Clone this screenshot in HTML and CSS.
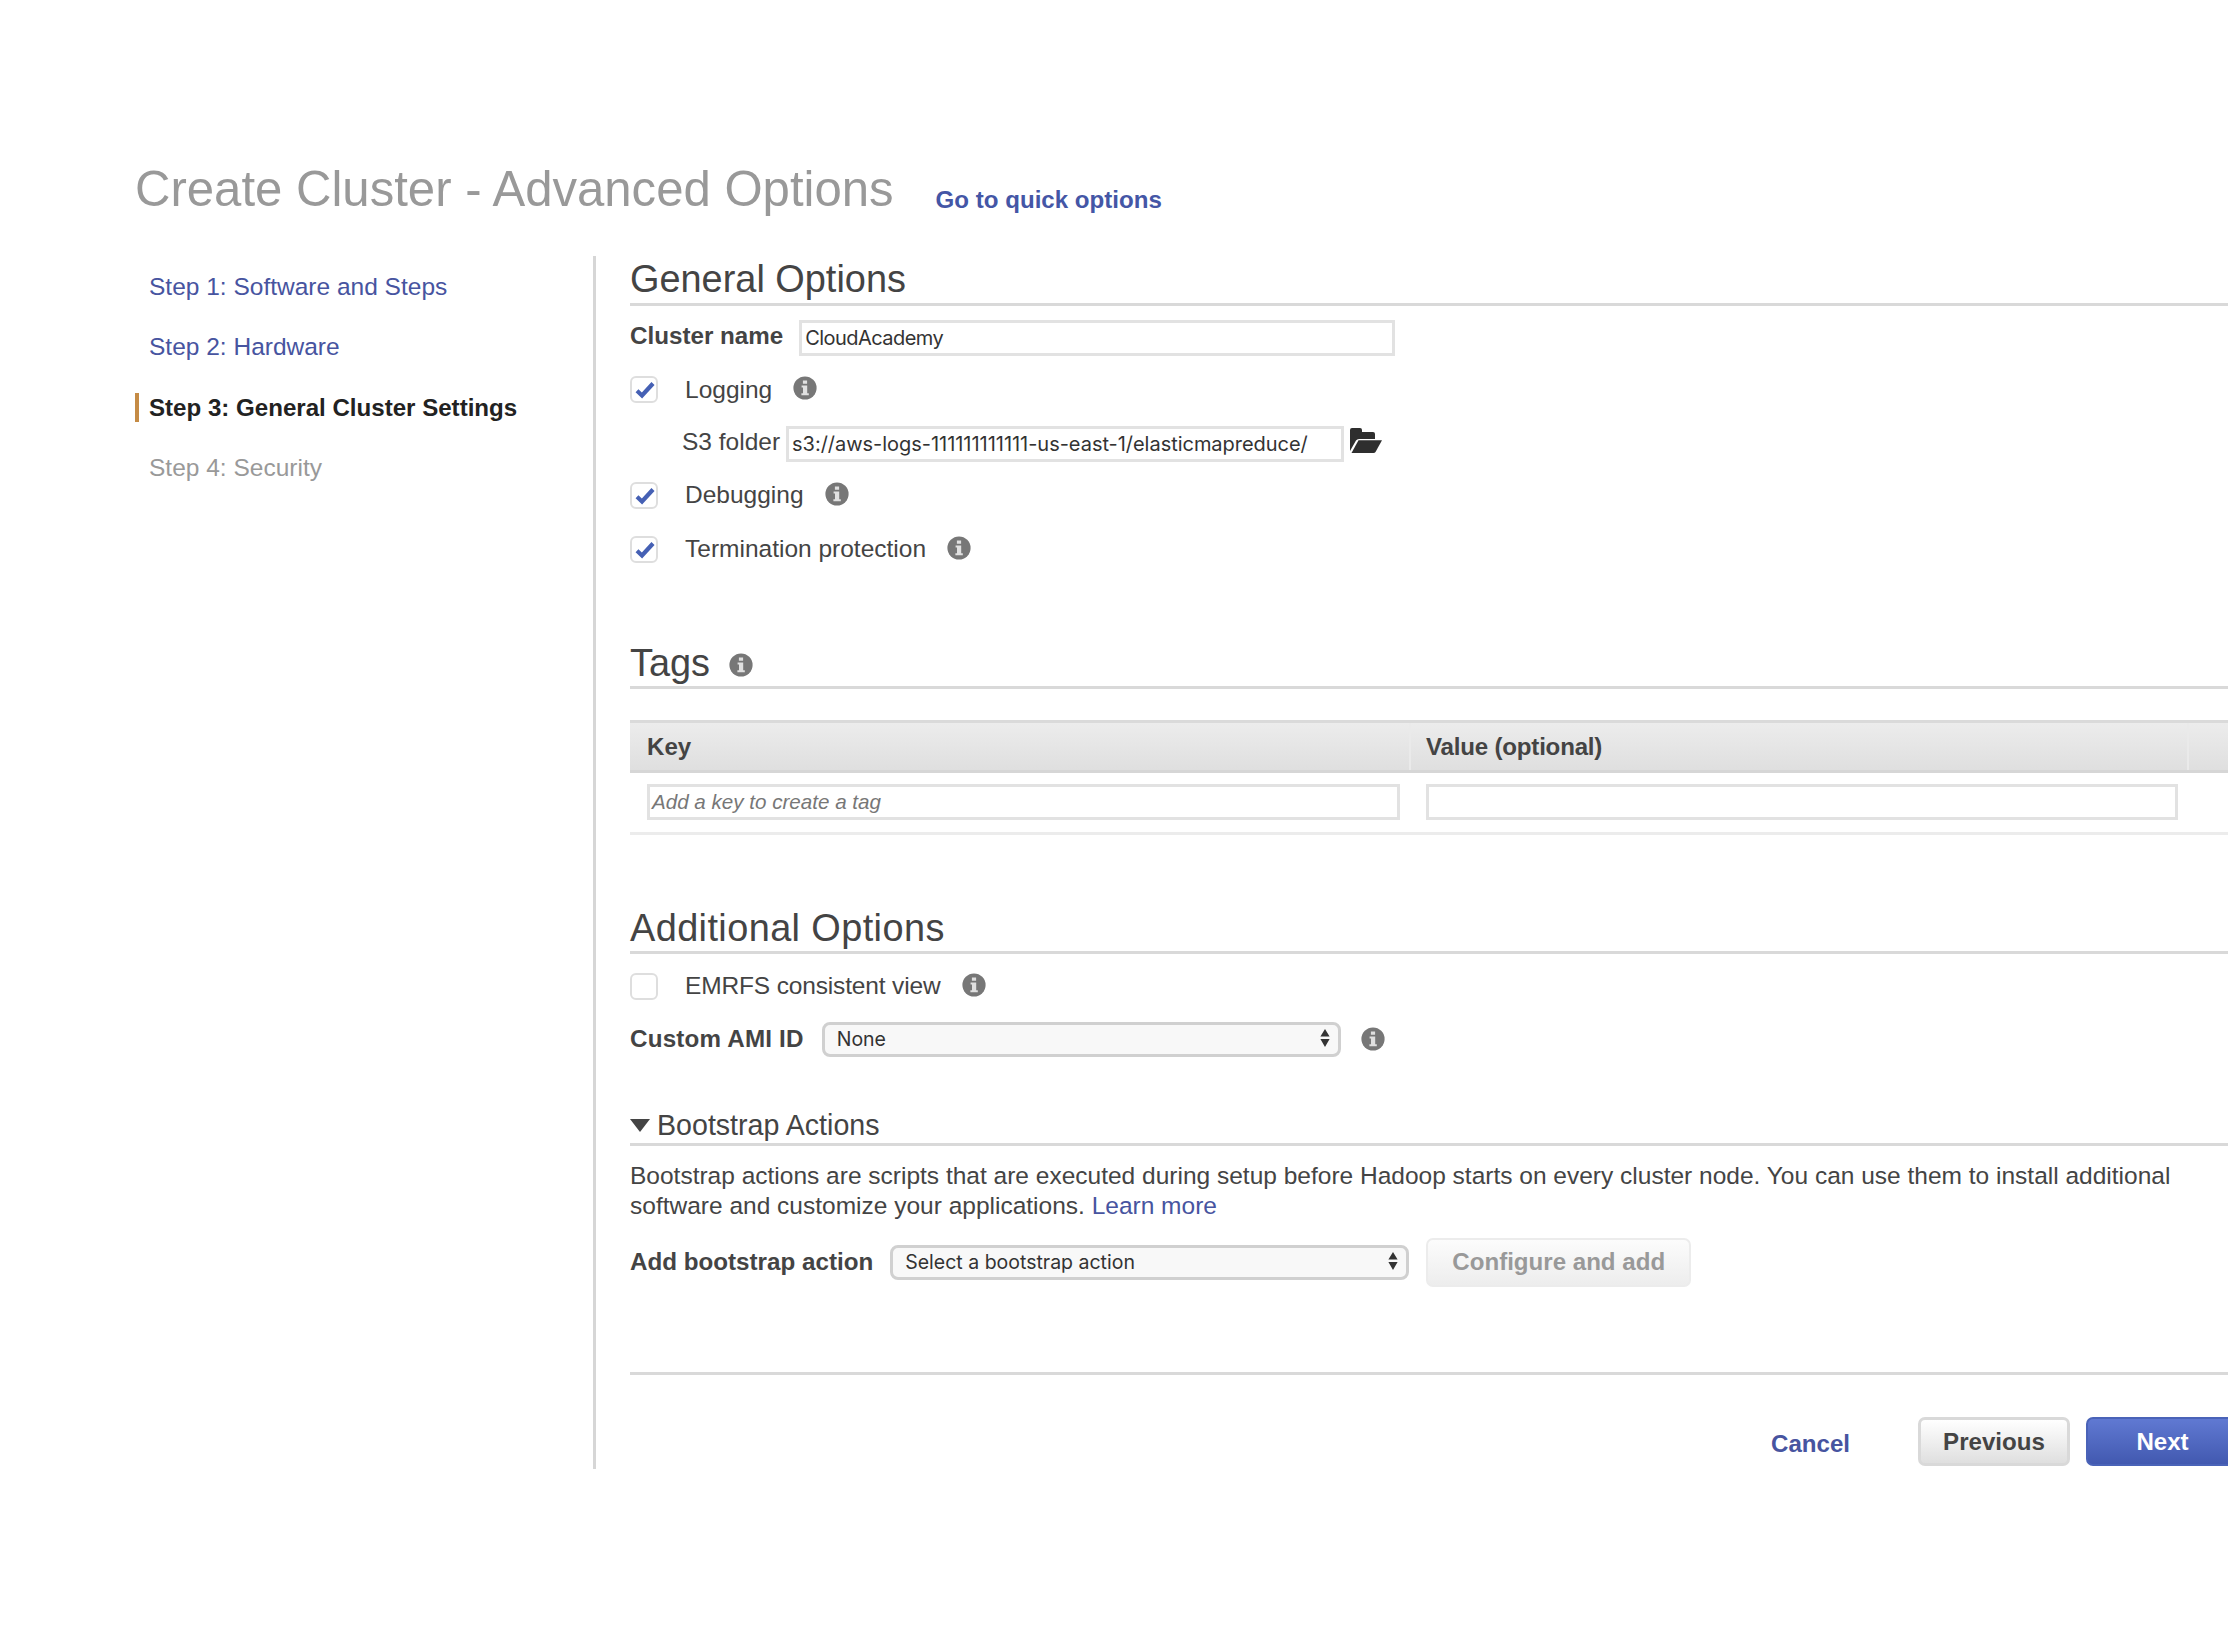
FILE: index.html
```html
<!DOCTYPE html>
<html lang="en">
<head>
<meta charset="utf-8">
<title>Create Cluster - Advanced Options</title>
<link rel="stylesheet" href="styles.css">
</head>
<body>
<svg class="defs" aria-hidden="true">
  <symbol id="info" viewBox="0 0 24 24">
    <circle cx="12" cy="12" r="11.6" fill="#777"/>
    <path d="M9.9 4.4h4.2v3.4H9.9zM8.6 9.6h5.6v7.6h1.6v2H8.4v-2H10v-5.6H8.6z" fill="#e0e0e0"/>
  </symbol>
  <symbol id="check" viewBox="0 0 20 18">
    <path d="M2 9.800 7 14.500 18 2.500" fill="none" stroke="#4560b4" stroke-width="4.200"/>
  </symbol>
  <symbol id="arrows" viewBox="0 0 10 18">
    <path d="M5 0 9.6 7.4H.4zM5 18 9.6 10H.4z" fill="#333"/>
  </symbol>
</svg>
<header class="page-head">
  <h1>Create Cluster - Advanced Options</h1>
  <a class="quick">Go to quick options</a>
</header>
<div class="layout">
  <nav class="steps">
    <a class="step">Step 1: Software and Steps</a>
    <a class="step">Step 2: Hardware</a>
    <a class="step current">Step 3: General Cluster Settings</a>
    <a class="step disabled">Step 4: Security</a>
  </nav>
  <main>
    <h2 class="h-general">General Options</h2>
    <div class="row row-name">
      <span class="label">Cluster name</span>
      <div class="input input-name">CloudAcademy</div>
    </div>
    <div class="row row-logging">
      <span class="checkbox"><svg><use href="#check"/></svg></span>
      <span class="text">Logging</span>
      <svg class="info"><use href="#info"/></svg>
    </div>
    <div class="row row-s3">
      <span class="text">S3 folder</span>
      <div class="input input-s3">s3://aws-logs-111111111111-us-east-1/elasticmapreduce/</div>
      <svg class="folder" viewBox="0 0 34 27">
        <path d="M1 24V3q0-2 2-2h8q2 0 2 2v2h11q2 0 2 2v5H10q-2 0-3 1.500z" fill="#2e2e2e"/>
        <path d="M9.500 13.200H33L26.500 25q-.6 1-2 1H2.500z" fill="#2e2e2e"/>
      </svg>
    </div>
    <div class="row row-debug">
      <span class="checkbox"><svg><use href="#check"/></svg></span>
      <span class="text">Debugging</span>
      <svg class="info"><use href="#info"/></svg>
    </div>
    <div class="row row-term">
      <span class="checkbox"><svg><use href="#check"/></svg></span>
      <span class="text">Termination protection</span>
      <svg class="info"><use href="#info"/></svg>
    </div>

    <h2 class="h-tags">Tags <svg class="info"><use href="#info"/></svg></h2>
    <div class="table">
      <div class="tr thead"><span>Key</span><span>Value (optional)</span><span></span></div>
      <div class="tr tbody">
        <span><span class="input placeholder">Add a key to create a tag</span></span>
        <span><span class="input"></span></span>
        <span></span>
      </div>
    </div>

    <h2 class="h-additional">Additional Options</h2>
    <div class="row row-emrfs">
      <span class="checkbox"></span>
      <span class="text">EMRFS consistent view</span>
      <svg class="info"><use href="#info"/></svg>
    </div>
    <div class="row row-ami">
      <span class="label">Custom AMI ID</span>
      <div class="select">None<svg class="arrows"><use href="#arrows"/></svg></div>
      <svg class="info"><use href="#info"/></svg>
    </div>

    <h3><svg class="caret" viewBox="0 0 20 13"><path d="M0 0h20L10 13z" fill="#444"/></svg>Bootstrap Actions</h3>
    <p>Bootstrap actions are scripts that are executed during setup before Hadoop starts on every cluster node. You can use them to install additional<br>software and customize your applications. <a>Learn more</a></p>
    <div class="row row-action">
      <span class="label">Add bootstrap action</span>
      <div class="select">Select a bootstrap action<svg class="arrows"><use href="#arrows"/></svg></div>
      <span class="button muted">Configure and add</span>
    </div>

    <footer>
      <a class="cancel">Cancel</a>
      <span class="button previous">Previous</span>
      <span class="button next">Next</span>
    </footer>
  </main>
</div>
</body>
</html>
```
FILE: styles.css
```css
* { box-sizing: border-box; }
html { overflow: hidden; }
body {
  margin: 0;
  width: 2228px;
  height: 1638px;
  overflow: hidden;
  background: #fff;
  color: #444;
  font-family: "Liberation Sans", Arial, sans-serif;
  font-size: 24.5px;
  line-height: 30px;
  white-space: nowrap;
}
.defs { display: none; }
svg { display: block; flex: none; }
a { color: #4754a0; }

.page-head {
  display: flex;
  align-items: flex-start;
  height: 256px;
  padding: 158px 0 0 135px;
}
h1 { margin: 0; font-size: 49.1px; line-height: 62px; font-weight: 400; color: #999; }
.quick { margin: 27px 0 0 42px; font-size: 24.1px; font-weight: 700; color: #4456a6; }

.layout { display: flex; }
.steps { display: flex; flex: none; flex-direction: column; width: 593px; padding: 16px 0 0 135px; }
.step { height: 29px; margin-bottom: 31.4px; padding-left: 10px; border-left: 4px solid transparent; }
.current { border-color: #c58b45; color: #222; font-size: 24.1px; font-weight: 700; }
.disabled { color: #999; }

main { flex: none; width: 1635px; height: 1213px; padding-left: 34px; border-left: 3px solid #d6d6d6; }
h2 {
  display: flex;
  align-items: center;
  height: 49px;
  margin: 0;
  padding-bottom: 1px;
  border-bottom: 3px solid #d9d9d9;
  font-size: 37.9px;
  font-weight: 400;
}
h2 .info { margin: 4px 0 0 19px; }
.h-general { height: 50px; padding-bottom: 2px; }
.h-tags { margin-top: 60px; }
.h-additional { margin-top: 70px; letter-spacing: .4px; }

.row { display: flex; align-items: center; }
.row > * { flex: none; }
.row .info { margin: 0 0 3px 21px; }
.label { font-size: 24.2px; font-weight: 700; }
.info { width: 24px; height: 24px; }
.input {
  display: block;
  height: 36px;
  padding-left: 3px;
  border: 3px solid #e2e2e2;
  background: #fff;
  color: #333;
  font-family: Inter, sans-serif;
  font-size: 20px;
}
.checkbox {
  display: flex;
  width: 28px;
  height: 27px;
  margin-right: 27px;
  padding: 3px 0 0 3px;
  border: 2px solid #dedede;
  border-radius: 6px;
}
.checkbox svg { width: 20px; height: 18px; }

.row-name { height: 53px; margin-top: 5px; }
.row-name .label { padding-bottom: 4px; }
.input-name { width: 596px; margin-left: 16px; letter-spacing: -.55px; }
.row-logging { height: 51px; }
.row-s3 { height: 57px; padding-left: 52px; }
.row-s3 .text { padding-bottom: 3px; }
.input-s3 { width: 558px; margin-left: 6px; letter-spacing: -.03px; }
.folder { width: 34px; height: 27px; margin: 0 0 7px 5px; }
.row-debug { height: 46px; }
.row-term { height: 62px; }

.table { margin-top: 31px; }
.tr { display: grid; grid-template-columns: 779px 778px 41px; }
.thead {
  height: 53px;
  border-top: 3px solid #dadada;
  border-bottom: 3px solid #d6d6d6;
  background: linear-gradient(#ececec, #dfdfdf);
  font-size: 24.1px;
  font-weight: 700;
  line-height: 47px;
}
.thead > span { padding-left: 17px; }
.thead > span + span { padding-left: 15px; border-left: 2px solid #eaeaea; letter-spacing: -.2px; }
.tbody { height: 62px; padding-top: 11px; border-bottom: 3px solid #ececec; }
.tbody > span { padding: 0 9px 0 17px; }
.input.placeholder {
  padding-left: 2px;
  color: #777;
  font: italic 20.6px/30px "Liberation Sans", Arial, sans-serif;
}

.row-emrfs { height: 64px; }
.row-emrfs .text { letter-spacing: -.15px; }
.row-ami { height: 42px; }
.row-ami .label { letter-spacing: .2px; }
.select {
  display: flex;
  align-items: center;
  justify-content: space-between;
  width: 519px;
  height: 35px;
  padding: 0 8px 0 12px;
  border: 3px solid #d0d0d0;
  border-radius: 8px;
  background: #f8f8f8;
  color: #333;
  font-family: Inter, sans-serif;
  font-size: 19.5px;
}
.row-ami .select { margin-left: 18px; }
.row .select + .info { margin: 0 0 1px 20px; }
.arrows { width: 10px; height: 18px; margin-bottom: 2px; }

h3 {
  display: flex;
  align-items: center;
  height: 39px;
  margin: 47px 0 0;
  border-bottom: 3px solid #d9d9d9;
  font-size: 28.6px;
  font-weight: 400;
}
.caret { width: 20px; height: 13px; margin-right: 7px; }
p { margin: 15px 0; }
.row-action { height: 52px; }
.row-action .select { margin-left: 17px; }
.button {
  display: flex;
  flex: none;
  align-items: center;
  justify-content: center;
  height: 49px;
  border: 3px solid #d9d9d9;
  border-radius: 7px;
  background: linear-gradient(#fff, #dfdfdf);
  font-size: 24.1px;
  font-weight: 700;
}
.muted { width: 265px; margin-left: 17px; border: 2px solid #ececec; background: linear-gradient(#fcfcfc, #ededed); color: #999; }

footer {
  display: flex;
  align-items: center;
  margin-top: 84px;
  padding: 42px 0 0 1141px;
  border-top: 3px solid #d9d9d9;
}
.cancel { flex: none; width: 147px; padding-top: 4px; font-size: 24.1px; font-weight: 700; }
.previous { width: 152px; }
.next {
  width: 153px;
  margin-left: 16px;
  border: 2px solid #4a63b8;
  background: linear-gradient(#6079d2, #4259b0);
  color: #fff;
}
```
